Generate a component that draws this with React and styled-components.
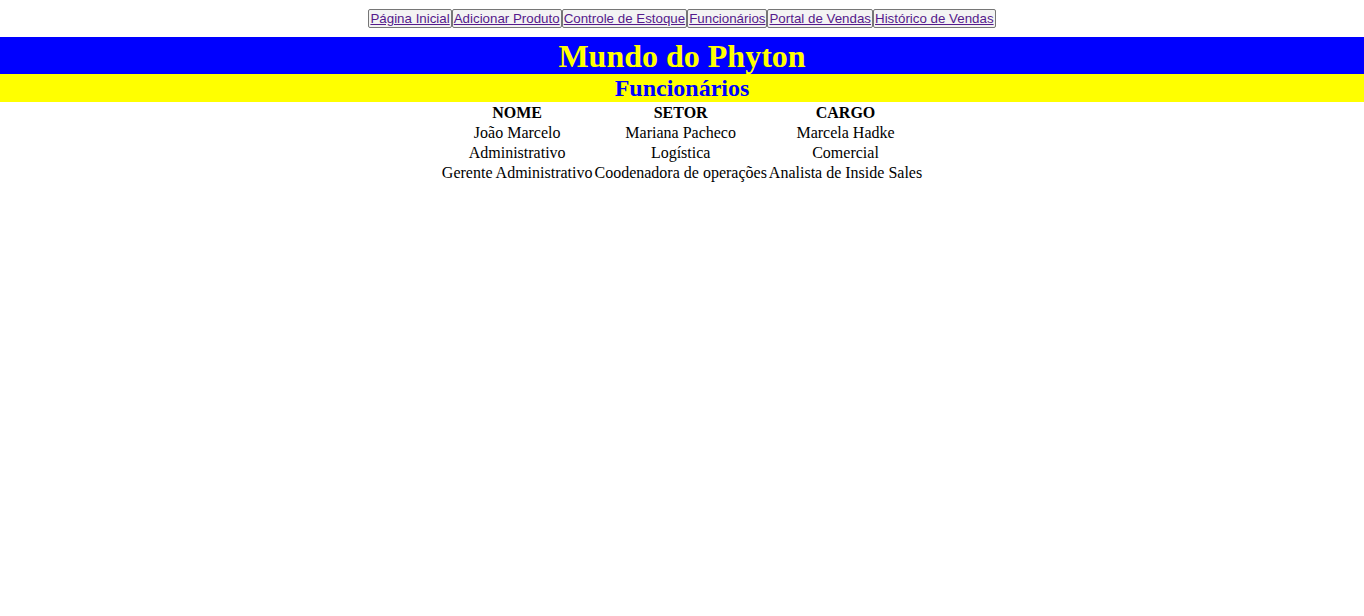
import React from "react";
import styled, { createGlobalStyle } from "styled-components";

const GlobalStyle = createGlobalStyle`
  body {
    margin: 0;
    background: #ffffff;
    font-family: "Liberation Serif", "Times New Roman", serif;
  }
`;

const Nav = styled.nav`
  display: flex;
  justify-content: center;
  padding: 9px 0;
`;

const NavButton = styled.button`
  height: 19px;
  padding: 0 1px;
  margin: 0;
  border: 1px solid #767676;
  border-radius: 2px;
  background: #f3f3f3;
  font-family: "Liberation Sans", Arial, sans-serif;
  font-size: 13.33px;
  line-height: 15px;

  a {
    color: #551a8b;
    text-decoration: underline;
  }
`;

const TitleBar = styled.h1`
  margin: 0;
  height: 37px;
  background: #0000ff;
  color: #ffff00;
  text-align: center;
  font-size: 32px;
  font-weight: bold;
  line-height: 38px;
`;

const SubtitleBar = styled.h2`
  margin: 0;
  height: 28px;
  background: #ffff00;
  color: #0000ff;
  text-align: center;
  font-size: 24px;
  font-weight: bold;
  line-height: 28px;
`;

const Table = styled.table`
  margin: 0 auto;
  border-spacing: 2px;
  font-size: 16px;
  color: #000;

  th,
  td {
    padding: 0;
    text-align: center;
    line-height: 18px;
  }
`;

const links = [
  "Página Inicial",
  "Adicionar Produto",
  "Controle de Estoque",
  "Funcionários",
  "Portal de Vendas",
  "Histórico de Vendas",
];

const rows = [
  ["João Marcelo", "Mariana Pacheco", "Marcela Hadke"],
  ["Administrativo", "Logística", "Comercial"],
  ["Gerente Administrativo", "Coodenadora de operações", "Analista de Inside Sales"],
];

const App = () => {
  return (
    <>
      <GlobalStyle />
      <Nav>
        {links.map((label) => (
          <NavButton key={label}>
            <a href="#">{label}</a>
          </NavButton>
        ))}
      </Nav>
      <TitleBar>Mundo do Phyton</TitleBar>
      <SubtitleBar>Funcionários</SubtitleBar>
      <Table>
        <thead>
          <tr>
            <th>NOME</th>
            <th>SETOR</th>
            <th>CARGO</th>
          </tr>
        </thead>
        <tbody>
          {rows.map((row, i) => (
            <tr key={i}>
              {row.map((cell) => (
                <td key={cell}>{cell}</td>
              ))}
            </tr>
          ))}
        </tbody>
      </Table>
    </>
  );
};

export default App;
